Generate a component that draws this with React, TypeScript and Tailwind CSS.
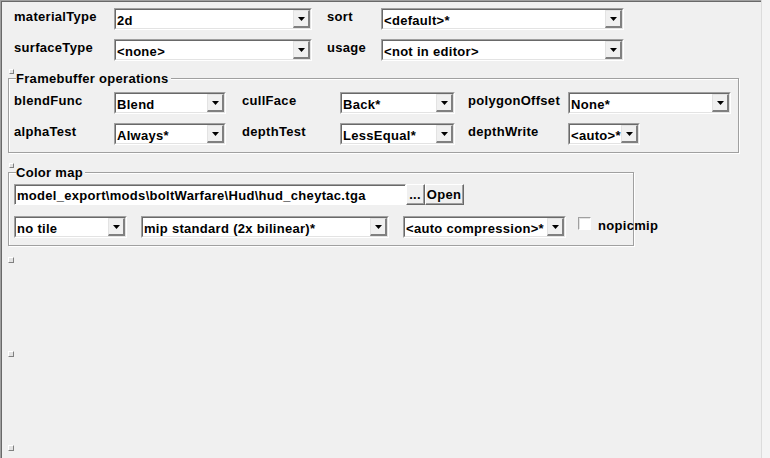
import React from "react";

const FONT = { fontFamily: '"Liberation Sans", Arial, sans-serif' };

function Label({ w, children }: { w: number; children: React.ReactNode }) {
  return (
    <div
      className="shrink-0 text-[13px] font-bold leading-[18px] tracking-[0.3px] text-black whitespace-nowrap"
      style={{ width: w }}
    >
      {children}
    </div>
  );
}

function Arrow() {
  return (
    <svg width="7" height="4" viewBox="0 0 7 4" className="block mt-[1px]">
      <polygon points="0,0 7,0 3.5,4" fill="#000" />
    </svg>
  );
}

function Combo({ w, text }: { w: number; text: string }) {
  return (
    <div
      className="shrink-0 h-[22px] border-t border-l border-t-[#a0a0a0] border-l-[#a0a0a0] border-b border-r border-b-white border-r-white"
      style={{ width: w }}
    >
      <div className="h-full flex border-t border-l border-t-[#696969] border-l-[#696969] border-b border-r border-b-[#e3e3e3] border-r-[#e3e3e3] bg-white">
        <div className="flex-1 min-w-0 pl-[1px] pt-[3px] text-[13px] font-bold leading-[16px] tracking-[0.3px] text-black whitespace-nowrap overflow-hidden">
          {text}
        </div>
        <div className="w-[17px] h-full shrink-0 flex items-center justify-center bg-[#f0f0f0] border-t border-l border-t-[#e3e3e3] border-l-[#e3e3e3] border-b-2 border-r-2 border-b-[#808080] border-r-[#808080]">
          <Arrow />
        </div>
      </div>
    </div>
  );
}

function Btn({ w, children }: { w: number; children: React.ReactNode }) {
  return (
    <div
      className="shrink-0 h-[21px] border-t border-l border-t-white border-l-white border-b border-r border-b-[#696969] border-r-[#696969]"
      style={{ width: w }}
    >
      <div className="h-full flex items-center justify-center pt-[1px] border-b border-r border-b-[#a0a0a0] border-r-[#a0a0a0] bg-[#f0f0f0] text-[13px] font-bold leading-[16px] tracking-[0.3px] text-black">
        {children}
      </div>
    </div>
  );
}

function Square() {
  return (
    <div className="w-[6px] h-[6px] border-t border-l border-t-white border-l-white border-b border-r border-b-[#808080] border-r-[#808080] bg-[#e3e3e3]" />
  );
}

function Group({
  title,
  w,
  className,
  children,
}: {
  title: string;
  w: number;
  className: string;
  children: React.ReactNode;
}) {
  return (
    <div className={`relative ${className}`} style={{ width: w }}>
      <div className="border border-[#a0a0a0] shadow-[1px_1px_0_white,inset_1px_1px_0_white]">
        {children}
      </div>
      <div className="absolute -top-[7px] left-[1px] flex items-start">
        <div className="-mt-[2px] w-[5px] h-[5px] border-t border-l border-t-white border-l-white border-b border-r border-b-[#808080] border-r-[#808080] bg-[#e3e3e3]" />
        <div className="ml-[2px] pr-[2px] bg-[#f0f0f0] text-[13px] font-bold leading-[15px] tracking-[0.3px] text-black whitespace-nowrap">
          {title}
        </div>
      </div>
    </div>
  );
}

export default function App() {
  return (
    <div className="w-[770px] h-[458px] bg-[#f0f0f0] flex overflow-hidden" style={FONT}>
      <div className="w-[761px] h-full border-t border-l border-t-[#a0a0a0] border-l-[#a0a0a0]">
        <div className="h-full border-t border-l border-t-[#696969] border-l-[#696969]">
          <div className="pl-[12px] pt-[6px]">
            <div className="flex items-start">
              <Label w={100}>materialType</Label>
              <Combo w={198} text="2d" />
              <div className="w-[15px] shrink-0" />
              <Label w={54}>sort</Label>
              <Combo w={243} text="<default>*" />
            </div>
            <div className="flex items-start mt-[9px]">
              <Label w={100}>surfaceType</Label>
              <Combo w={198} text="<none>" />
              <div className="w-[15px] shrink-0" />
              <Label w={54}>usage</Label>
              <Combo w={243} text="<not in editor>" />
            </div>
          </div>

          <Group title="Framebuffer operations" w={731} className="ml-[6px] mt-[17px]">
            <div className="pl-[5px] pt-[13px] pb-[7px]">
              <div className="flex items-start">
                <Label w={100}>blendFunc</Label>
                <Combo w={112} text="Blend" />
                <div className="w-[16px] shrink-0" />
                <Label w={98}>cullFace</Label>
                <Combo w={115} text="Back*" />
                <div className="w-[13px] shrink-0" />
                <Label w={100}>polygonOffset</Label>
                <Combo w={163} text="None*" />
              </div>
              <div className="flex items-start mt-[9px]">
                <Label w={100}>alphaTest</Label>
                <Combo w={112} text="Always*" />
                <div className="w-[16px] shrink-0" />
                <Label w={98}>depthTest</Label>
                <Combo w={115} text="LessEqual*" />
                <div className="w-[13px] shrink-0" />
                <Label w={100}>depthWrite</Label>
                <Combo w={72} text="<auto>*" />
              </div>
            </div>
          </Group>

          <Group title="Color map" w={626} className="ml-[6px] mt-[19px]">
            <div className="pl-[5px] pt-[11px] pb-[7px]">
              <div className="flex items-start">
                <div className="w-[392px] h-[21px] shrink-0 border-t border-l border-t-[#a0a0a0] border-l-[#a0a0a0] border-b border-r border-b-white border-r-white">
                  <div className="h-full border-t border-l border-t-[#696969] border-l-[#696969] bg-white pl-[1px] pt-[2px] text-[13px] font-bold leading-[16px] tracking-[0.3px] text-black whitespace-nowrap overflow-hidden">
                    {"model_export\\mods\\boltWarfare\\Hud\\hud_cheytac.tga"}
                  </div>
                </div>
                <Btn w={19}>...</Btn>
                <Btn w={39}>Open</Btn>
              </div>
              <div className="flex items-start mt-[11px]">
                <Combo w={113} text="no tile" />
                <div className="w-[14px] shrink-0" />
                <Combo w={248} text="mip standard (2x bilinear)*" />
                <div className="w-[14px] shrink-0" />
                <Combo w={163} text="<auto compression>*" />
                <div className="w-[12px] shrink-0" />
                <div className="mt-[1px] w-[13px] h-[13px] shrink-0 border-t border-l border-t-[#a0a0a0] border-l-[#a0a0a0] border-b border-r border-b-white border-r-white">
                  <div className="w-full h-full border-t border-l border-t-[#e3e3e3] border-l-[#e3e3e3] bg-white" />
                </div>
                <div className="ml-[7px] mt-[1px]">
                  <Label w={70}>nopicmip</Label>
                </div>
              </div>
            </div>
          </Group>

          <div className="ml-[6px] mt-[11px] flex flex-col gap-[88px]">
            <Square />
            <Square />
            <Square />
          </div>
        </div>
      </div>
      <div className="w-[9px] h-full border-l border-l-[#dcdcdc] bg-[#f4f4f4]" />
    </div>
  );
}
